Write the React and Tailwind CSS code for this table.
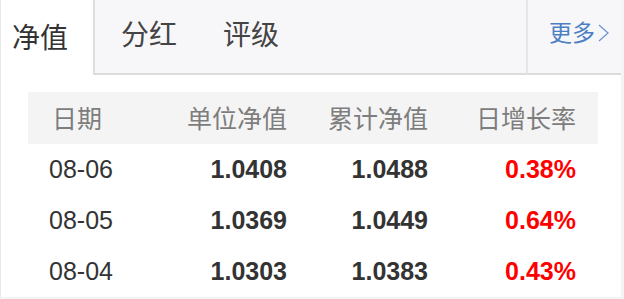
import React from 'react';

const rows = [
  { date: "08-06", unit: "1.0408", total: "1.0488", rate: "0.38%" },
  { date: "08-05", unit: "1.0369", total: "1.0449", rate: "0.64%" },
  { date: "08-04", unit: "1.0303", total: "1.0383", rate: "0.43%" },
];

const cjk = { fontFamily: '"Noto Sans CJK SC", "Noto Sans", sans-serif' };
const num = { fontFamily: '"Liberation Sans", Arial, sans-serif' };

const App = () => {
  return (
    <div className="w-[624px] h-[299px] bg-[#f4f4f4]">
      <div className="w-[621px] h-[297px] bg-white border-l border-[#e8e8e8] flex flex-col">
        {/* Tabs */}
        <div className="flex h-[75px]" style={cjk}>
          <div className="w-[94px] h-full bg-white border-r-2 border-[#dedede] flex items-center pl-[11px] pb-[4px] text-[28px] text-[#333]">
            净值
          </div>
          <div className="flex-1 h-full bg-[#f7f7fa] border-b-2 border-[#dcdcdc] flex items-center pl-[26px] pb-[7px] gap-[46px] text-[28px] text-[#444]">
            <span>分红</span>
            <span>评级</span>
          </div>
          <div className="w-[95px] h-full bg-[#f7f7fa] border-l-2 border-[#e6e6e6] border-b-2 border-b-[#dcdcdc] flex items-center pl-[21px] pb-[10px] text-[23px] text-[#4d7fc4]">
            <span>更多</span>
            <svg width="14" height="20" viewBox="0 0 14 20" className="ml-[1px] mt-[2px]">
              <polyline points="3,2 12,10 3,18" fill="none" stroke="#6d97d0" strokeWidth="1.3" />
            </svg>
          </div>
        </div>

        {/* Table */}
        <div className="mx-[27px] mt-[17px] w-[570px]">
          <div className="grid grid-cols-[96px_139px_141px_148px] h-[52px] items-center bg-[#f4f4f4] text-[25px] text-[#7d7d7d] pl-[24px]" style={cjk}>
            <span>日期</span>
            <span className="text-right">单位净值</span>
            <span className="text-right">累计净值</span>
            <span className="text-right">日增长率</span>
          </div>
          {rows.map((r) => (
            <div key={r.date} className="grid grid-cols-[100px_138px_141px_148px] h-[51px] items-center text-[25px] pl-[21px]" style={num}>
              <span className="text-[#333]">{r.date}</span>
              <span className="text-right font-bold text-[#333]">{r.unit}</span>
              <span className="text-right font-bold text-[#333]">{r.total}</span>
              <span className="text-right font-bold text-[#ff0000]">{r.rate}</span>
            </div>
          ))}
        </div>
      </div>
    </div>
  );
};

export default App;
